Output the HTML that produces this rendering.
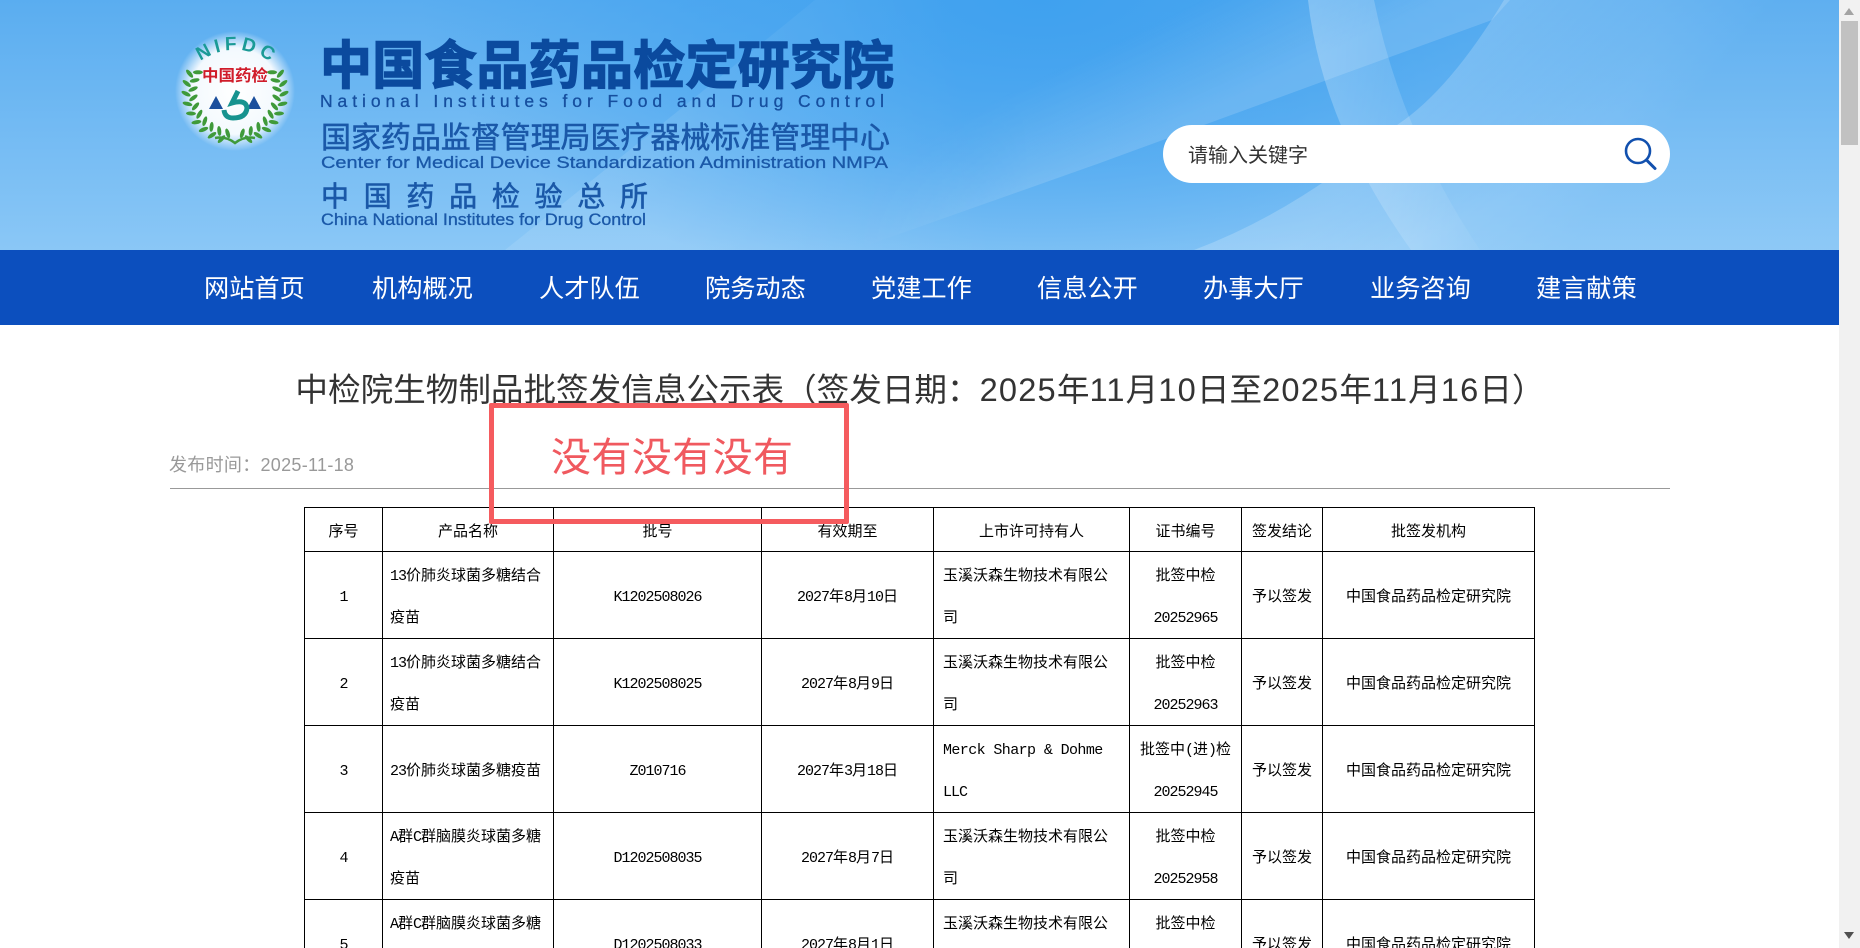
<!DOCTYPE html>
<html lang="zh-CN">
<head>
<meta charset="utf-8">
<title>中检院生物制品批签发信息公示表</title>
<style>
*{box-sizing:border-box}
html,body{margin:0;padding:0;width:1860px;height:948px;overflow:hidden;background:#fff}
body{position:relative;font-family:"Liberation Sans","Noto Sans CJK SC",sans-serif;color:#333}
.hd{position:absolute;left:0;top:0;width:1839px;height:250px;background:radial-gradient(ellipse 620px 300px at 1040px 0,#3fa1ef 0%,rgba(63,161,239,.55) 55%,rgba(63,161,239,0) 100%),linear-gradient(180deg,#5aadf0 0%,#8ac7f6 100%);overflow:hidden}
.hd svg{position:absolute;left:0;top:0}
.nav{position:absolute;left:0;top:250px;width:1839px;height:75px;background:#0c4fbe}
.nav span{position:absolute;top:0;line-height:78px;font-size:25.2px;color:#fff;white-space:nowrap}
.search{position:absolute;left:1163px;top:125px;width:507px;height:58px;border-radius:29px;background:#fff}
.search span{position:absolute;left:25px;top:0;line-height:62px;font-size:20px;color:#333}
.search svg{position:absolute;left:459px;top:12px}
h1{position:absolute;left:170px;top:366px;width:1500px;margin:0;text-align:center;font-size:32.6px;font-weight:400;line-height:48px;color:#333;white-space:nowrap}
h1 span{letter-spacing:1.2px}
.date{position:absolute;left:169px;top:451px;font-size:18px;line-height:28px;color:#999;letter-spacing:.3px}
.hr{position:absolute;left:170px;top:488px;width:1500px;height:1px;background:#999}
table{position:absolute;left:304px;top:507px;width:1230px;table-layout:fixed;border-collapse:collapse;font-family:"WenQuanYi Zen Hei","Noto Sans CJK SC",sans-serif;font-size:15px;color:#000}
td{border:1px solid #000;padding:2px 9px 0;text-align:center;line-height:42px;height:87px;vertical-align:middle;overflow:hidden;white-space:nowrap}
tr.h td{height:44px;line-height:41px}
td.l{text-align:left}
td:nth-child(2).l{padding-left:7px}
i{font-style:normal;font-family:"Liberation Mono",monospace;font-size:15px;letter-spacing:-1px;line-height:1}
.red{position:absolute;left:489px;top:403px;width:360px;height:121px;border:5px solid #f55b5e;border-radius:2px}
.red span{position:absolute;left:57px;top:22px;font-size:40px;line-height:56px;letter-spacing:.4px;color:#f0595f;white-space:nowrap}
.sb{position:absolute;left:1839px;top:0;width:21px;height:948px;background:#f1f1f1}
.sb b{position:absolute;left:2px;top:21px;width:17px;height:124px;background:#c1c1c1}
.sb u{position:absolute;left:5px;width:0;height:0;border-left:5px solid transparent;border-right:5px solid transparent}
</style>
</head>
<body>
<div class="hd">
<svg width="1839" height="250" viewBox="0 0 1839 250">
<defs>
<radialGradient id="glow" cx="50%" cy="50%" r="50%"><stop offset="0" stop-color="#fff"/><stop offset=".72" stop-color="#fff" stop-opacity=".92"/><stop offset="1" stop-color="#fff" stop-opacity="0"/></radialGradient>
<linearGradient id="bd" x1="0" y1="0" x2="1" y2="0"><stop offset="0" stop-color="#fff" stop-opacity=".26"/><stop offset="1" stop-color="#fff" stop-opacity=".04"/></linearGradient>
<linearGradient id="sa" gradientUnits="userSpaceOnUse" x1="1397" y1="125" x2="1560" y2="260"><stop offset="0" stop-color="#fff" stop-opacity=".2"/><stop offset="1" stop-color="#fff" stop-opacity=".03"/></linearGradient>
<linearGradient id="sl" gradientUnits="userSpaceOnUse" x1="640" y1="125" x2="960" y2="60"><stop offset="0" stop-color="#fff" stop-opacity=".1"/><stop offset="1" stop-color="#fff" stop-opacity="0"/></linearGradient>
<linearGradient id="sc" gradientUnits="userSpaceOnUse" x1="1100" y1="163" x2="1055" y2="70"><stop offset="0" stop-color="#fff" stop-opacity=".15"/><stop offset="1" stop-color="#fff" stop-opacity="0"/></linearGradient>
<linearGradient id="mg" gradientUnits="userSpaceOnUse" x1="854" y1="0" x2="1030" y2="0"><stop offset="0" stop-color="#000"/><stop offset="1" stop-color="#fff"/></linearGradient>
<mask id="mk" maskUnits="userSpaceOnUse" x="0" y="0" width="1839" height="250"><rect width="1839" height="250" fill="url(#mg)"/></mask>
<g id="leaves" fill="#3f9a3a">
<ellipse cx="235" cy="50" rx="2" ry="5" transform="rotate(190 235 92) rotate(-28 235 50)"/>
<ellipse cx="235" cy="50" rx="2" ry="5" transform="rotate(202 235 92) rotate(-28 235 50)"/>
<ellipse cx="235" cy="50" rx="2" ry="5" transform="rotate(214 235 92) rotate(-28 235 50)"/>
<ellipse cx="235" cy="50" rx="2" ry="5" transform="rotate(226 235 92) rotate(-28 235 50)"/>
<ellipse cx="235" cy="50" rx="2" ry="5" transform="rotate(238 235 92) rotate(-28 235 50)"/>
<ellipse cx="235" cy="50" rx="2" ry="5" transform="rotate(250 235 92) rotate(-28 235 50)"/>
<ellipse cx="235" cy="50" rx="2" ry="5" transform="rotate(262 235 92) rotate(-28 235 50)"/>
<ellipse cx="235" cy="50" rx="2" ry="5" transform="rotate(274 235 92) rotate(-28 235 50)"/>
<ellipse cx="235" cy="50" rx="2" ry="5" transform="rotate(286 235 92) rotate(-28 235 50)"/>
<ellipse cx="235" cy="50" rx="2" ry="5" transform="rotate(298 235 92) rotate(-28 235 50)"/>
<ellipse cx="235" cy="43" rx="2" ry="5" transform="rotate(196 235 92) rotate(28 235 43)"/>
<ellipse cx="235" cy="43" rx="2" ry="5" transform="rotate(208 235 92) rotate(28 235 43)"/>
<ellipse cx="235" cy="43" rx="2" ry="5" transform="rotate(220 235 92) rotate(28 235 43)"/>
<ellipse cx="235" cy="43" rx="2" ry="5" transform="rotate(232 235 92) rotate(28 235 43)"/>
<ellipse cx="235" cy="43" rx="2" ry="5" transform="rotate(244 235 92) rotate(28 235 43)"/>
<ellipse cx="235" cy="43" rx="2" ry="5" transform="rotate(256 235 92) rotate(28 235 43)"/>
<ellipse cx="235" cy="43" rx="2" ry="5" transform="rotate(268 235 92) rotate(28 235 43)"/>
<ellipse cx="235" cy="43" rx="2" ry="5" transform="rotate(280 235 92) rotate(28 235 43)"/>
<ellipse cx="235" cy="43" rx="2" ry="5" transform="rotate(292 235 92) rotate(28 235 43)"/>
</g>
<path id="arc" d="M188 74 A58 58 0 0 1 282 74"/>
</defs>
<!-- background sweeps -->
<path d="M505 250 Q680 110 815 0 L1100 0 L1100 250Z" fill="url(#sl)"/>
<path d="M854 250 L1100 163 L1327 80 L1492 20 L1510 0 L760 0 L854 250Z" fill="url(#sc)" mask="url(#mk)"/>
<path d="M1504 0 Q1450 90 1397 125 Q1300 210 1194 250 L1839 250 L1839 0Z" fill="url(#sa)"/>
<path d="M1308 0 Q1322 125 1411 250 L1480 250 Q1400 130 1374 0Z" fill="url(#bd)"/>
<!-- logo -->
<ellipse cx="235" cy="91" rx="60" ry="60" fill="url(#glow)"/>
<use href="#leaves"/>
<use href="#leaves" transform="translate(470 0) scale(-1 1)"/>
<path d="M215 138 Q226 136 235 143 Q244 136 255 138" fill="none" stroke="#3f9a3a" stroke-width="2.5"/>
<text font-family="Liberation Sans,sans-serif" font-size="19" font-weight="700" fill="#1a9a96" text-anchor="middle" letter-spacing="4"><textPath href="#arc" startOffset="52%">NIFDC</textPath></text>
<text x="202" y="81" textLength="66" lengthAdjust="spacingAndGlyphs" font-family="Liberation Sans,Noto Sans CJK SC,sans-serif" font-size="16" font-weight="700" fill="#d01c2a">中国药检</text>
<path d="M216 96 L223 109 L209 109Z M254 96 L261 109 L247 109Z" fill="#1b4f9c"/>
<path d="M238 91 L232 103 Q246 99 247 108 Q246 118 233 118 Q225 118 224 110" fill="none" stroke="#17938f" stroke-width="5"/>
<!-- title lockup -->
<g font-family="Liberation Sans,Noto Sans CJK SC,sans-serif">
<text x="320" y="84" textLength="574" font-size="52" font-weight="700" fill="#0b4a9e" stroke="#0b4a9e" stroke-width="1.4">中国食品药品检定研究院</text>
<text x="320" y="107" textLength="564" font-size="17.5" fill="#164f9f" stroke="#164f9f" stroke-width=".3">National Institutes for Food and Drug Control</text>
<text x="321" y="148" textLength="569" font-size="30" fill="#1a58a8" stroke="#1a58a8" stroke-width=".5">国家药品监督管理局医疗器械标准管理中心</text>
<text x="321" y="168" textLength="567" lengthAdjust="spacingAndGlyphs" font-size="17" fill="#1a58a8" stroke="#1a58a8" stroke-width=".3">Center for Medical Device Standardization Administration NMPA</text>
<text x="321" y="206" textLength="327" font-size="28" fill="#1a58a8" stroke="#1a58a8" stroke-width=".6">中国药品检验总所</text>
<text x="321" y="225" textLength="325" lengthAdjust="spacingAndGlyphs" font-size="17" fill="#1a58a8" stroke="#1a58a8" stroke-width=".3">China National Institutes for Drug Control</text>
</g>
</svg>
<div class="search"><span>请输入关键字</span>
<svg width="36" height="36" viewBox="0 0 36 36"><circle cx="16" cy="14" r="12" fill="none" stroke="#1150ae" stroke-width="2.6"/><path d="M24.5 23 L33 31.5" stroke="#1150ae" stroke-width="3" stroke-linecap="round"/></svg>
</div>
</div>
<div class="nav">
<span style="left:204px">网站首页</span><span style="left:372px">机构概况</span><span style="left:539px">人才队伍</span><span style="left:705px">院务动态</span><span style="left:871px">党建工作</span><span style="left:1037px">信息公开</span><span style="left:1203px">办事大厅</span><span style="left:1370px">业务咨询</span><span style="left:1536px">建言献策</span>
</div>
<h1>中检院生物制品批签发信息公示表（签发日期：<span>2025</span>年<span>11</span>月<span>10</span>日至<span>2025</span>年<span>11</span>月<span>16</span>日）</h1>
<div class="date">发布时间：2025-11-18</div>
<div class="hr"></div>
<table>
<colgroup><col style="width:78px"><col style="width:171px"><col style="width:208px"><col style="width:172px"><col style="width:196px"><col style="width:112px"><col style="width:81px"><col style="width:212px"></colgroup>
<tr class="h"><td>序号</td><td>产品名称</td><td>批号</td><td>有效期至</td><td>上市许可持有人</td><td>证书编号</td><td>签发结论</td><td>批签发机构</td></tr>
<tr><td><i>1</i></td><td class="l"><i>13</i>价肺炎球菌多糖结合<br>疫苗</td><td><i>K1202508026</i></td><td><i>2027</i>年<i>8</i>月<i>10</i>日</td><td class="l">玉溪沃森生物技术有限公<br>司</td><td>批签中检<br><i>20252965</i></td><td>予以签发</td><td>中国食品药品检定研究院</td></tr>
<tr><td><i>2</i></td><td class="l"><i>13</i>价肺炎球菌多糖结合<br>疫苗</td><td><i>K1202508025</i></td><td><i>2027</i>年<i>8</i>月<i>9</i>日</td><td class="l">玉溪沃森生物技术有限公<br>司</td><td>批签中检<br><i>20252963</i></td><td>予以签发</td><td>中国食品药品检定研究院</td></tr>
<tr><td><i>3</i></td><td class="l"><i>23</i>价肺炎球菌多糖疫苗</td><td><i>Z010716</i></td><td><i>2027</i>年<i>3</i>月<i>18</i>日</td><td class="l"><i style="letter-spacing:-.6px">Merck Sharp &amp; Dohme</i><br><i>LLC</i></td><td>批签中<i>(</i>进<i>)</i>检<br><i>20252945</i></td><td>予以签发</td><td>中国食品药品检定研究院</td></tr>
<tr><td><i>4</i></td><td class="l"><i>A</i>群<i>C</i>群脑膜炎球菌多糖<br>疫苗</td><td><i>D1202508035</i></td><td><i>2027</i>年<i>8</i>月<i>7</i>日</td><td class="l">玉溪沃森生物技术有限公<br>司</td><td>批签中检<br><i>20252958</i></td><td>予以签发</td><td>中国食品药品检定研究院</td></tr>
<tr><td><i>5</i></td><td class="l"><i>A</i>群<i>C</i>群脑膜炎球菌多糖<br>疫苗</td><td><i>D1202508033</i></td><td><i>2027</i>年<i>8</i>月<i>1</i>日</td><td class="l">玉溪沃森生物技术有限公<br>司</td><td>批签中检<br><i>20252957</i></td><td>予以签发</td><td>中国食品药品检定研究院</td></tr>
</table>
<div class="red"><span>没有没有没有</span></div>
<div class="sb"><u style="top:8px;border-bottom:7px solid #a3a3a3"></u><b></b><u style="top:932px;border-top:7px solid #505050"></u></div>
</body>
</html>
